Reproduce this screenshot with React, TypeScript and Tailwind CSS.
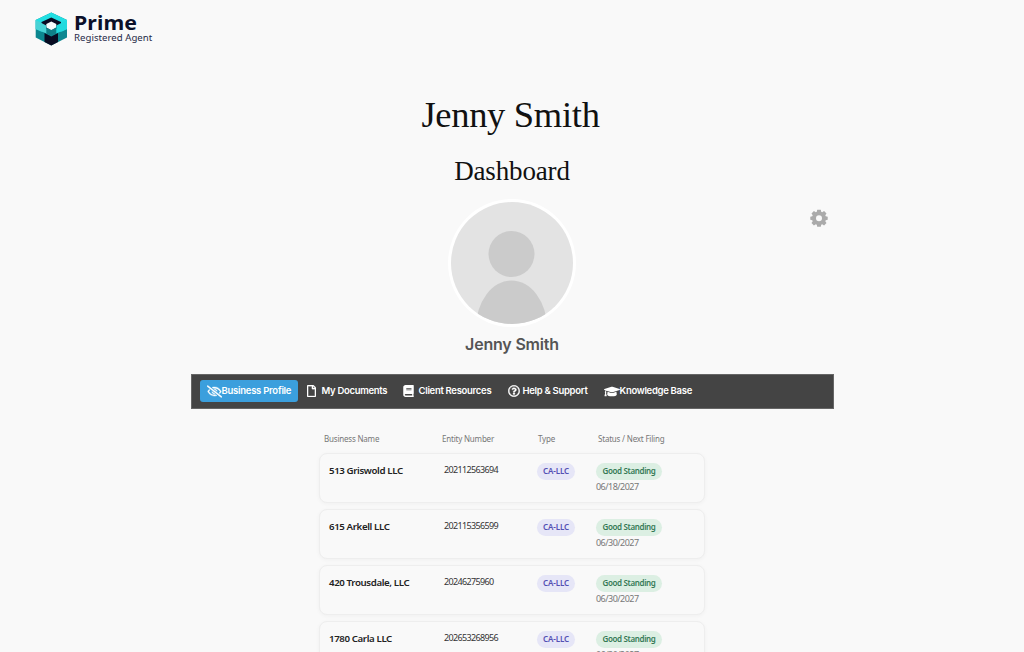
import type { ReactNode } from "react";
import { clsx } from "clsx";
import {
  FaBook,
  FaGraduationCap,
  FaRegEyeSlash,
  FaRegFile,
  FaRegQuestionCircle,
} from "react-icons/fa";

type Business = {
  name: string;
  entityNumber: string;
  type: string;
  status: string;
  nextFiling: string;
};

const BUSINESSES: Business[] = [
  {
    name: "513 Griswold LLC",
    entityNumber: "202112563694",
    type: "CA-LLC",
    status: "Good Standing",
    nextFiling: "06/18/2027",
  },
  {
    name: "615 Arkell LLC",
    entityNumber: "202115356599",
    type: "CA-LLC",
    status: "Good Standing",
    nextFiling: "06/30/2027",
  },
  {
    name: "420 Trousdale, LLC",
    entityNumber: "20246275960",
    type: "CA-LLC",
    status: "Good Standing",
    nextFiling: "06/30/2027",
  },
  {
    name: "1780 Carla LLC",
    entityNumber: "202653268956",
    type: "CA-LLC",
    status: "Good Standing",
    nextFiling: "06/30/2027",
  },
];

function Logo() {
  return (
    <a href="#" aria-label="Prime Registered Agent" className="flex w-fit items-center gap-[7px]">
      <svg viewBox="0 0 32 34" className="h-[34px] w-8 shrink-0">
        <path d="M16.300.5 32 8v17.500L16.300 33.500.7 25.500V8Z" fill="#0c8790" />
        <path d="M16.300.5 32 8v9l-5 2.500H6L.7 17V8Z" fill="#22dfe3" />
        {/* opening of the box */}
        <path d="m16.300 5.500 9.700 4.500v6l-9.700 4-9.800-4v-6Z" fill="#080b22" />
        <path d="m16.300 9.500 5 2.500v3.500l-5 3-5-3V12Z" fill="#f6fdfd" />
        {/* front walls */}
        <path d="m.7 8 10.600 5.500v3l5 2.500v4.500L.7 17Z" fill="#48d3d6" />
        <path d="m32 8-10.700 5.500v3l-5 2.500v4.500L32 17Z" fill="#20dade" />
        <path d="m11.300 15.500 5 2.500 5-2.500v6l-5 2.500-5-2.500Z" fill="#0f7f88" />
        <path d="m9.500 21 6.800 3.500 6.700-3.500v9l-6.700 3.500L9.500 30Z" fill="#080b22" />
      </svg>
      <span className="flex flex-col font-['Noto_Sans',sans-serif] text-[#0b1029]">
        <span className="h-[19px] w-fit origin-left scale-x-[1.12] pt-[1px] text-[19px] leading-[17px] font-bold tracking-[0.1px]">
          Prime
        </span>
        <span className="h-[11px] text-[9.6px] leading-[9px] tracking-[0.04px] whitespace-nowrap text-[#252a48]">
          Registered Agent
        </span>
      </span>
    </a>
  );
}

function Avatar() {
  return (
    <svg viewBox="0 0 128 128" className="size-32 shrink-0" aria-hidden="true">
      <defs>
        <clipPath id="avatar-clip">
          <circle cx="64" cy="64" r="61" />
        </clipPath>
      </defs>
      <circle cx="64" cy="64" r="64" fill="#fff" />
      <g clipPath="url(#avatar-clip)">
        <path d="M0 0h128v128H0z" fill="#e3e3e3" />
        <circle cx="63.500" cy="55" r="23" fill="#cbcbcb" />
        <ellipse cx="63.500" cy="129" rx="35.500" ry="47.500" fill="#cbcbcb" />
      </g>
    </svg>
  );
}

function GearIcon() {
  return (
    <svg viewBox="0 0 18 18" className="size-[18px]" fill="#aaa">
      <path
        fillRule="evenodd"
        d="M7.200.7h3.600l.4 2.100 1 .4 1.900-1.200 2.400 2.400-1.200 1.900.4 1 2 .4v3.100l-2 .4-.4 1 1.200 1.900-2.400 2.400-1.900-1.200-1 .4-.4 2H7.200l-.4-2-1-.4-1.900 1.200-2.400-2.400 1.200-1.900-.4-1-2-.4V7.700l2-.4.4-1-1.200-1.900 2.400-2.400 1.900 1.200 1-.4ZM9 6.200a3 3 0 1 0 0 6 3 3 0 0 0 0-6Z"
      />
    </svg>
  );
}

function NavItem({
  icon,
  label,
  active,
  className,
}: {
  icon: ReactNode;
  label: string;
  active?: boolean;
  className?: string;
}) {
  return (
    <a
      href="#"
      className={clsx(
        "flex h-[22px] shrink-0 items-center rounded-[3px] font-['Inter',sans-serif] text-[9.5px] font-semibold whitespace-nowrap text-white",
        active ? "bg-[#3b9fdd] tracking-[-0.26px]" : "tracking-[-0.3px]",
        className
      )}
    >
      {icon}
      {label}
    </a>
  );
}

function BusinessCard({ business }: { business: Business }) {
  return (
    <div className="flex h-[50px] items-start rounded-lg border border-[#eeeeee] bg-[#f9f9f9] pl-[9px] shadow-[0_1px_4px_rgba(0,0,0,0.04)]">
      <div className="w-[115px] pt-[9px] text-[9.7px] leading-4 font-semibold tracking-[-0.38px] whitespace-nowrap text-[#222]">
        {business.name}
      </div>
      <div className="w-[93px] pt-[8px] text-[9px] leading-4 tracking-[-0.65px] text-[#333]">
        {business.entityNumber}
      </div>
      <div className="w-[59px] pt-[9px]">
        <span className="flex h-[17px] w-[38px] items-center justify-center rounded-full bg-[#e6e6f7] pb-px text-[8px] font-semibold tracking-[-0.15px] whitespace-nowrap text-[#5450b4]">
          {business.type}
        </span>
      </div>
      <div className="pt-[9px]">
        <span className="flex h-[17px] w-[66px] items-center justify-center rounded-full bg-[#dcefe3] pb-px text-[8px] font-semibold tracking-[-0.35px] whitespace-nowrap text-[#357a56]">
          {business.status}
        </span>
        <div className="text-[9px] leading-[13px] tracking-[-0.53px] text-[#777]">
          {business.nextFiling}
        </div>
      </div>
    </div>
  );
}

export default function App() {
  return (
    <div className="h-[652px] w-full overflow-hidden bg-[#f9f9f9]">
      <header className="h-[92px] pt-3 pl-[35px]">
        <Logo />
      </header>

      <main className="flex flex-col items-center">
        <h1 className="h-[59px] pr-[3px] font-['Liberation_Serif',serif] text-[36.5px] leading-[46px] tracking-[-0.3px] whitespace-nowrap text-[#111]">
          Jenny Smith
        </h1>
        <h2 className="h-[48px] font-['Liberation_Serif',serif] text-[27px] leading-[40px] tracking-[-0.15px] whitespace-nowrap text-[#111]">
          Dashboard
        </h2>

        <section className="grid w-[642px] grid-cols-[1fr_128px_1fr]">
          <div />
          <Avatar />
          <button type="button" aria-label="Settings" className="mt-[10px] mr-[5px] h-fit justify-self-end">
            <GearIcon />
          </button>
        </section>
        <div className="h-[47px] pt-[5px] font-['Inter',sans-serif] text-base leading-6 font-semibold tracking-[-0.2px] text-[#555]">
          Jenny Smith
        </div>

        <nav className="flex h-[35px] w-[643px] items-center border border-[#666] bg-[#444] pb-px pl-2">
          <NavItem
            active
            className="w-[98px] pl-[7px]"
            icon={
              <FaRegEyeSlash className="h-[13px] w-[15px] shrink-0 stroke-current stroke-[18]" />
            }
            label="Business Profile"
          />
          <NavItem
            className="ml-[9px] w-[96px] gap-[6px]"
            icon={<FaRegFile className="h-3 w-[9px] stroke-current stroke-[12]" />}
            label="My Documents"
          />
          <NavItem
            className="w-[105px] gap-[5px]"
            icon={<FaBook className="h-3 w-[11px]" />}
            label="Client Resources"
          />
          <NavItem
            className="w-[96px] gap-[3px]"
            icon={<FaRegQuestionCircle className="size-3 stroke-current stroke-[14]" />}
            label="Help & Support"
          />
          <NavItem icon={<FaGraduationCap className="h-[13px] w-[16px]" />} label="Knowledge Base" />
        </nav>

        <section className="w-[386px] pt-[22px] font-['Noto_Sans',sans-serif]">
          <div className="flex h-[22px] pl-[5px] text-[8px] leading-4 tracking-[-0.2px] whitespace-nowrap text-[#777]">
            <div className="w-[118px]">Business Name</div>
            <div className="w-[96px]">Entity Number</div>
            <div className="w-[60px]">Type</div>
            <div>Status / Next Filing</div>
          </div>
          <div className="flex flex-col gap-[6px]">
            {BUSINESSES.map((business) => (
              <BusinessCard key={business.name} business={business} />
            ))}
          </div>
        </section>
      </main>
    </div>
  );
}
